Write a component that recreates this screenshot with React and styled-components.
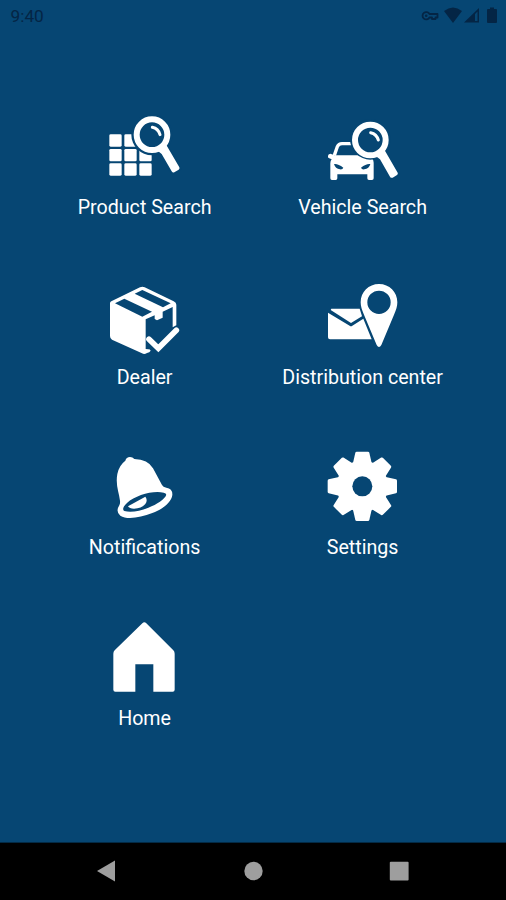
import styled, { createGlobalStyle } from 'styled-components';

const BLUE = '#064673';
const INK = '#042545';

const GlobalStyle = createGlobalStyle`
  * {
    box-sizing: border-box;
  }
  body {
    margin: 0;
    background: ${BLUE};
    font-family: Roboto, 'Liberation Sans', sans-serif;
  }
`;

const Screen = styled.div`
  display: flex;
  flex-direction: column;
  width: 506px;
  height: 900px;
  overflow: hidden;
  background: ${BLUE};
`;

const StatusBar = styled.header`
  display: flex;
  justify-content: space-between;
  align-items: center;
  height: 32px;
  padding: 0 7px 0 10.5px;
  color: ${INK};
`;

const Clock = styled.span`
  font-size: 17.3px;
  line-height: 32px;
`;

const StatusIcons = styled.svg`
  display: block;
  width: 79px;
  height: 32px;
`;

const Menu = styled.main`
  flex: 1;
  display: grid;
  grid-template-columns: 218px 218px;
  grid-template-rows: 170px 170px 171px 170px;
  padding: 75px 0 0 35.6px;
`;

const MenuItem = styled.a`
  display: flex;
  flex-direction: column;
  align-items: center;
  color: #fff;
`;

const Icon = styled.svg`
  display: block;
  width: 90px;
  height: 80px;
  fill: #fff;
`;

const Label = styled.span`
  margin-top: 9px;
  font-size: 19.65px;
  line-height: 24px;
  white-space: nowrap;
`;

const NavBar = styled.footer`
  height: 58px;
  background: #000;
  border-top: 1px solid #032a45;
`;

const NavIcons = styled.svg`
  display: block;
  width: 506px;
  height: 57px;
  fill: #9e9e9e;
`;

const Magnifier = () => (
  <>
    <path d="M172 132L200 116L239 183Q241 187 237 190L224 198Q219 200 216 195L186 143Z" />
    <circle cx="157" cy="85" r="46" fill={BLUE} stroke="#fff" strokeWidth="18" />
    <path d="M158 63Q176 67 181 85" fill="none" stroke="#fff" strokeWidth="9" strokeLinecap="round" />
  </>
);

const ProductSearchIcon = () => (
  <Icon viewBox="1 2 270 240">
    {[84, 128, 171].map((y) =>
      [29, 74, 119].map((x) => <rect key={`${x}-${y}`} x={x} y={y} width="37" height="37" rx="4" />)
    )}
    <circle cx="157" cy="85" r="62" fill={BLUE} />
    <path d="M171 138L206 120L246 188L218 207Z" fill={BLUE} />
    <Magnifier />
  </Icon>
);

const VehicleSearchIcon = () => (
  <Icon viewBox="1 -9 270 240">
    <path d="M50 136L59 110Q63 101 73 101H101" fill="none" stroke="#fff" strokeWidth="10" />
    <path d="M31 138Q31 132 38 131L51 136H151Q168 145 168 158V205Q168 210 163 210H154Q149 210 149 205V193H59V205Q59 210 54 210H43Q38 210 38 205V160Q38 153 42 148L33 144Q30 142 31 138Z" />
    <path d="M49 162Q60 160 77 173Q75 179 67 178Q53 176 49 162Z" fill={BLUE} />
    <path d="M158 162Q146 160 130 173Q132 179 140 178Q154 176 158 162Z" fill={BLUE} />
    <circle cx="158" cy="88" r="61" fill={BLUE} />
    <path d="M172 145L206 126L246 192L218 211Z" fill={BLUE} />
    <g transform="translate(1 5)">
      <Magnifier />
    </g>
  </Icon>
);

const DealerIcon = () => (
  <Icon viewBox="1 -3 270 240">
    <path d="M31 76Q31 72 35 70L121 28Q128 25 135 28L222 70Q230 74 230 80V142L219 148V87L189 101V119L172 127L165 123V112L138 124V213L146 214Q152 214 153 218Q150 223 142 225Q134 230 127 226L37 185Q31 182 31 174Z" />
    <path d="M46 76L74 62L157 101L128 116Z" fill={BLUE} />
    <path d="M105 47L128 36L213 76L190 88Z" fill={BLUE} />
    <path d="M148 184L176 211L230 157" fill="none" stroke="#fff" strokeWidth="17" strokeLinecap="round" />
  </Icon>
);

const DistributionIcon = () => (
  <Icon viewBox="1 3 270 240">
    <path d="M31 110L96 149Q100 152 104 149L137 128L162 190H37Q31 190 31 184Z" />
    <path d="M41 98H126L133 121L100 141L39 102Z" />
    <path
      fillRule="evenodd"
      d="M184 24C215 24 239 48 239 79C239 92 235 102 230 114L191 207Q184 219 177 207L138 114C133 102 129 92 129 79C129 48 153 24 184 24ZM184 44A35 35 0 1 0 184 114A35 35 0 1 0 184 44Z"
    />
  </Icon>
);

const NotificationsIcon = () => (
  <Icon viewBox="1 -3 270 240">
    <path d="M77 38Q80 27 91 27Q99 27 104 33Q145 34 160 61L187 111Q190 117 200 119Q219 121 218 141C216 162 189 184 158 195C122 209 82 216 62 203Q47 191 59 172Q62 166 61 158C58 132 47 111 53 78Q58 52 77 38Z" />
    <path d="M74 189Q64 182 82 165C108 142 158 127 192 134Q207 137 193 151C171 174 111 198 74 189Z" fill={BLUE} />
    <path d="M85 175L137 146Q145 156 137 168Q125 182 103 182Q89 182 85 175Z" />
  </Icon>
);

const SettingsIcon = () => (
  <Icon viewBox="1 3 270 240">
    <g transform="translate(134 121)">
      <circle r="77" />
      {[0, 45, 90, 135, 180, 225, 270, 315].map((angle) => (
        <path
          key={angle}
          transform={`rotate(${angle})`}
          d="M-28 -70L-21 -101Q-20 -104 -17 -104H17Q20 -104 21 -101L28 -70Z"
        />
      ))}
      <circle r="30" fill={BLUE} />
    </g>
  </Icon>
);

const HomeIcon = () => (
  <Icon viewBox="1 6 270 240">
    <path d="M128 22Q134 16 140 22L221 103Q225 107 225 113V221Q225 227 219 227H161V145H107V227H47Q41 227 41 221V113Q41 107 45 103Z" />
  </Icon>
);

const items = [
  { label: 'Product Search', icon: ProductSearchIcon },
  { label: 'Vehicle Search', icon: VehicleSearchIcon },
  { label: 'Dealer', icon: DealerIcon },
  { label: 'Distribution center', icon: DistributionIcon },
  { label: 'Notifications', icon: NotificationsIcon },
  { label: 'Settings', icon: SettingsIcon },
  { label: 'Home', icon: HomeIcon },
];

const App = () => {
  return (
    <>
      <GlobalStyle />
      <Screen>
        <StatusBar>
          <Clock>9:40</Clock>
          <StatusIcons viewBox="420 0 79 32" fill={INK}>
            <path
              d="M429.5 14A3.7 3.7 0 1 0 429.5 17.5H432V19H435.5V17.5H437.5V14Z"
              fill="none"
              stroke={INK}
              strokeWidth="1.8"
              strokeLinejoin="round"
            />
            <circle cx="426.2" cy="15.7" r="1.3" />
            <path d="M444 11Q453 4 462 11L453 23Z" />
            <path d="M464 22.5L479 8V22.5ZM475 14V21H477.5V11.5Z" fillRule="evenodd" />
            <path d="M487 10Q487 9 488 9H490V7.5H494V9H496Q497 9 497 10V22Q497 23 496 23H488Q487 23 487 22Z" />
          </StatusIcons>
        </StatusBar>
        <Menu>
          {items.map(({ label, icon: ItemIcon }) => (
            <MenuItem key={label}>
              <ItemIcon />
              <Label>{label}</Label>
            </MenuItem>
          ))}
        </Menu>
        <NavBar>
          <NavIcons viewBox="0 843 506 57">
            <path d="M97 871L115 860.5V881.5Z" />
            <circle cx="253.5" cy="871" r="9.2" />
            <rect x="389.8" y="861.8" width="18.8" height="18.8" rx="1" />
          </NavIcons>
        </NavBar>
      </Screen>
    </>
  );
};

export default App;
